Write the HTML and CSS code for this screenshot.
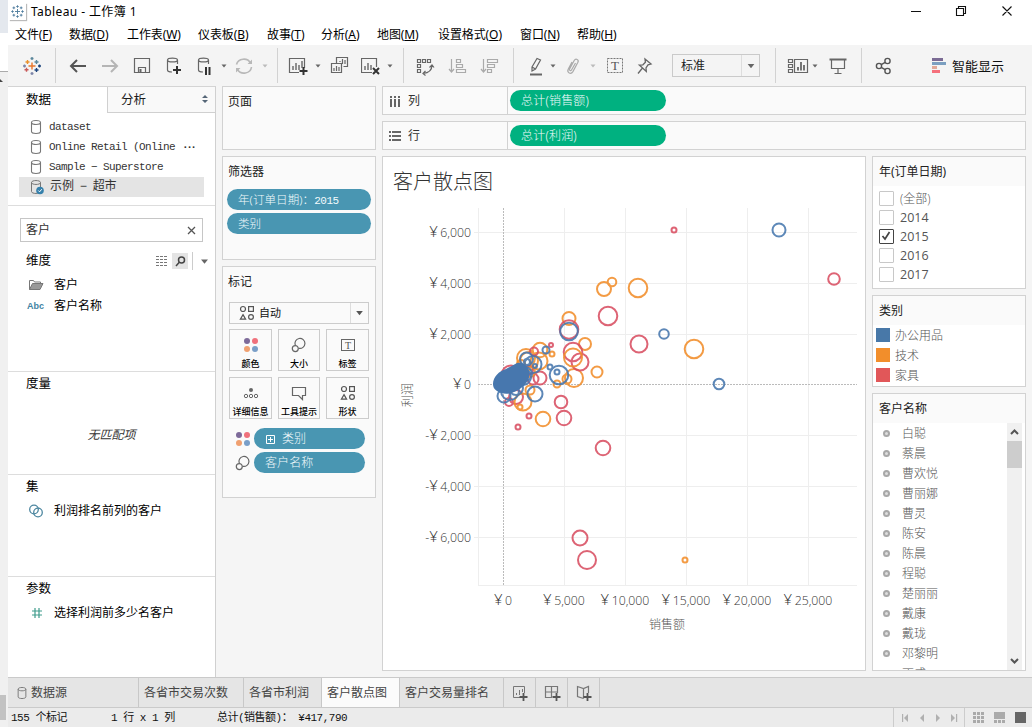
FILE: index.html
```html
<!DOCTYPE html>
<html lang="zh-CN">
<head>
<meta charset="utf-8">
<title>Tableau - 工作簿 1</title>
<link rel="stylesheet" href="styles.css">
</head>
<body>
<svg class="defs" aria-hidden="true">
  <defs>
    <symbol id="caret" viewBox="0 0 8 6"><path d="M1.5 1.5h5L4 4.6z" fill="currentColor"/></symbol>
    <symbol id="db" viewBox="0 0 14 16"><path d="M2.5 3.5v9c0 2.6 9 2.6 9 0v-9M2.5 3.5c0-2.6 9-2.6 9 0s-9 2.6-9 0z" fill="none" stroke="#777" stroke-width="1.1"/></symbol>
    <symbol id="shapes" viewBox="0 0 16 16"><g fill="none" stroke="#555" stroke-width="1.2"><circle cx="4" cy="4" r="2.5"/><rect x="9.6" y="1.6" width="4.8" height="4.8"/><path d="M4 9.6l2.6 4.6H1.4z"/><circle cx="12" cy="12" r="2.4"/></g></symbol>
    <symbol id="dots" viewBox="0 0 16 16"><circle cx="4" cy="4" r="3" fill="#7d6a99"/><circle cx="12" cy="4" r="3" fill="#f0717c"/><circle cx="4" cy="12" r="3" fill="#f0a070"/><circle cx="12" cy="12" r="3" fill="#7a9fc8"/></symbol>
    <symbol id="size" viewBox="0 0 16 16"><g fill="none" stroke="#666" stroke-width="1.2"><path d="M4.300 8.300A5 5 0 1 1 7.800 11.300"/><circle cx="4.300" cy="11.600" r="3"/></g></symbol>
    <symbol id="mark" viewBox="0 0 18 18"><g fill="none" stroke="#4d7c9d" stroke-width="1.1"><path d="M9 6v6M6 9h6M9 1.500v3M7.500 3h3M9 13.500v3M7.500 15h3M1.500 9h3M3 7.500v3M13.500 9h3M15 7.500v3M4.600 3v3.200M3 4.600h3.200M13.400 3v3.200M11.800 4.600h3.200M4.600 11.800v3.200M3 13.400h3.200M13.400 11.800v3.200M11.800 13.400h3.200"/></g></symbol>
  </defs>
</svg>
<div class="screen">
  <aside class="edge">
    <div class="edge-top"></div><div class="edge-mid"></div>
    <div class="edge-rest"><span class="edge-arrow"></span><span class="edge-thumb"></span></div>
  </aside>
  <div class="app">
    <header class="titlebar">
      <span class="appicon"><svg width="16" height="16"><use href="#mark"/></svg></span>
      <span class="apptitle">Tableau - 工作簿 1</span>
      <svg class="winbtns" width="110" height="20" fill="none" stroke="#111" stroke-width="1.1"><path d="M1 10.500h10M46.500 7.500h7v7h-7zM48.500 7.500v-2h7v7h-2M92.500 5.500l9 9M101.500 5.500l-9 9"/></svg>
    </header>
    <nav class="menubar">
      <span>文件(<u>F</u>)</span><span>数据(<u>D</u>)</span><span>工作表(<u>W</u>)</span><span>仪表板(<u>B</u>)</span><span>故事(<u>T</u>)</span><span>分析(<u>A</u>)</span><span>地图(<u>M</u>)</span><span>设置格式(<u>O</u>)</span><span>窗口(<u>N</u>)</span><span>帮助(<u>H</u>)</span>
    </nav>
    <div class="toolbar">
      <svg class="g14" width="20" height="20" viewBox="0 0 20 20" fill="none" stroke-width="1.4"><path stroke="#e8762c" d="M10 6.500v7M6.500 10h7"/><path stroke="#c85a5a" d="M4.500 11.800v4M2.500 13.800h4"/><path stroke="#5b879b" d="M14.500 4v4M12.500 6h4M10 1v3M8.500 2.500h3"/><path stroke="#eb912c" d="M5.500 4v4M3.500 6h4"/><path stroke="#1f457e" d="M14.500 12v4M12.500 14h4M17.500 8.500v3M16 10h3"/><path stroke="#7c85a8" d="M10 16v3M8.500 17.500h3M2.500 8.500v3M1 10h3"/></svg>
      <i class="sep g13"></i>
      <svg class="g12" width="20" height="20" fill="none" stroke="#555" stroke-width="2"><path d="M18 10H3M9 4l-6 6 6 6"/></svg>
      <svg class="g12" width="20" height="20" fill="none" stroke="#b5b5b5" stroke-width="2"><path d="M2 10h15M11 4l6 6-6 6"/></svg>
      <svg class="g12" width="20" height="20" fill="none" stroke="#666" stroke-width="1.200"><path d="M2.500 2.500h15v14h-15zM6.500 16.500v-5h7v5"/><path d="M8.500 13v3" stroke-width="2"/></svg>
      <svg class="g11" width="20" height="20" fill="none" stroke="#666" stroke-width="1.200"><path d="M14.500 8V4c0-2.500-10-2.500-10 0v10c0 1.300 2 2 4.500 2M4.500 4c0 2.600 10 2.600 10 0"/><path d="M14 10v8M10 14h8" stroke="#333" stroke-width="2"/></svg>
      <svg class="g11" width="20" height="20" fill="none" stroke="#666" stroke-width="1.200"><path d="M14.500 8V4c0-2.500-10-2.500-10 0v10c0 1.300 2 2 4.500 2M4.500 4c0 2.600 10 2.600 10 0"/><path d="M12 11v8M15.500 11v8" stroke="#333" stroke-width="2"/></svg>
      <svg class="caret g6" width="8" height="6"><use href="#caret"/></svg>
      <svg class="g6" width="20" height="20" fill="none" stroke="#b8b8b8" stroke-width="1.600"><path d="M2.500 8.500A7.500 7 0 0 1 16.500 7M17.500 11A7.500 7 0 0 1 3.500 13.500"/><path d="M18 3.500v4.500h-4.500zM2 16.500V12h4.500z" fill="#b8b8b8" stroke="none"/></svg>
      <svg class="caret pale g7" width="8" height="6"><use href="#caret"/></svg>
      <i class="sep g8"></i>
      <svg class="g10" width="20" height="20" fill="none" stroke="#666" stroke-width="1.200"><path d="M11 16.500H1.500v-14h15V12"/><path d="M5 14v-4M8 14V7M11 14V9M14 12V5" stroke-width="1.400"/><path d="M15.500 11v8M11.500 15h8" stroke="#333" stroke-width="2"/></svg>
      <svg class="caret g6" width="8" height="6"><use href="#caret"/></svg>
      <svg class="g8" width="20" height="20" fill="none" stroke="#666" stroke-width="1.200"><path d="M6.500 7.500v-6h11v9h-4M1.500 7.500h10v9h-10zM4 15v-3M6.500 15v-5M9 15v-4M10 6V5M12.500 8V3M15 8V4"/></svg>
      <svg class="g11" width="20" height="20" fill="none" stroke="#666" stroke-width="1.200"><path d="M11 16.500H.5v-14h15V11"/><path d="M4 14v-4M7 14V7M10 14V9" stroke-width="1.400"/><path d="M12 12l6 6M18 12l-6 6" stroke="#333" stroke-width="2"/></svg>
      <svg class="caret g5" width="8" height="6"><use href="#caret"/></svg>
      <i class="sep g9"></i>
      <svg class="g11" width="20" height="20" fill="none" stroke="#666" stroke-width="1.200"><path d="M2.500 3.500h3v3h-3zM7.500 3.500h3v3h-3zM12.500 3.500h3v3h-3zM2.500 8.500h3v3h-3zM2.500 13.500h3v3h-3zM17 9c0 6-4 8-9 8.500M14.500 11.500L17 9l2 2.500M10.500 15L8 17.500l2.500 2"/></svg>
      <svg class="g12" width="20" height="20" fill="none" stroke="#aaa" stroke-width="1.200"><path d="M4.500 3v13M2 13l2.500 3L7 13M9.500 3.500h4v3h-4zM9.500 8.500h6v3h-6zM9.500 13.500h9v3h-9z"/></svg>
      <svg class="g12" width="20" height="20" fill="none" stroke="#aaa" stroke-width="1.200"><path d="M4.500 3v13M2 13l2.500 3L7 13M8.500 3.500h10v3h-10zM8.500 8.500h7v3h-7zM8.500 13.500h4v3h-4z"/></svg>
      <i class="sep g14"></i>
      <svg class="g12" width="20" height="20" fill="none" stroke="#666" stroke-width="1.200"><path d="M6 11l5-8.500 3.500 1.500-5 9-3.500 2zM6 11l3.500 2"/><path d="M4 18.500h12" stroke-width="2"/></svg>
      <svg class="caret g3" width="8" height="6"><use href="#caret"/></svg>
      <svg class="g6" width="20" height="20" fill="none" stroke="#aaa" stroke-width="1.200"><path d="M12.500 7l-4 7c-.8 1.400-2.600.4-1.900-1l4.600-8.500c1.600-2.700 5-.8 3.700 1.800l-5 9.300c-2 3.300-6.300 1-4.700-2.300L9 6"/></svg>
      <svg class="caret pale g6" width="8" height="6"><use href="#caret"/></svg>
      <svg class="g8" width="20" height="20"><rect x="2.500" y="2.500" width="15" height="14" fill="none" stroke="#777" stroke-dasharray="2 1"/><text class="tglyph" x="10" y="14" text-anchor="middle">T</text></svg>
      <svg class="g10" width="20" height="20" fill="none" stroke="#666" stroke-width="1.300"><path d="M10 3l6 5-3 .8-2 3 .3 3.700-7-6.500 3.600-.2 2.500-2.500zM7.500 12L3 17.500"/></svg>
      <div class="fit g17"><span>标准</span><b><svg width="12" height="8" viewBox="0 0 8 6"><use href="#caret"/></svg></b></div>
      <i class="sep g15"></i>
      <svg class="g11" width="22" height="20" fill="none" stroke="#666" stroke-width="1.200"><path d="M1.500 3.500h4v3h-4zM1.500 8.500h4v3h-4zM1.500 13.500h4v3h-4zM7.500 3.500h13v13h-13z"/><path d="M11 14.500V11M14 14.500V6M17 14.500V9" stroke-width="1.800"/></svg>
      <svg class="caret g2" width="8" height="6"><use href="#caret"/></svg>
      <svg class="g9" width="20" height="20" fill="none" stroke="#666" stroke-width="1.200"><path d="M3.500 4v8.500h13V4M10 12.500v5M6.500 17.500h7"/><path d="M1.500 3.500h17" stroke-width="2"/></svg>
      <i class="sep g13"></i>
      <svg class="g12" width="20" height="20" fill="none" stroke="#555" stroke-width="1.400"><circle cx="5" cy="10" r="2.600"/><circle cx="13.500" cy="5" r="2.600"/><circle cx="13.500" cy="15" r="2.600"/><path d="M7.200 8.700l4-2.400M7.200 11.300l4 2.400"/></svg>
      <svg class="g37" width="15" height="16"><path fill="#7b6b94" d="M1 0h11v3H1z"/><path fill="#7b9fc0" d="M1 4h14v3H1z"/><path fill="#e0a898" d="M1 8h5v3H1z"/><path fill="#f5707c" d="M1 12h8v3H1z"/></svg>
      <span class="showme">智能显示</span>
    </div>

    <main class="workspace">
      <section class="data">
        <div class="tabs"><b>数据</b><span>分析<svg width="8" height="8"><path d="M4 0l3 3H1zM4 8L1 5h6z" fill="#567"/></svg></span></div>
        <ul class="sources">
          <li><svg width="14" height="16"><use href="#db"/></svg><span>dataset</span></li>
          <li><svg width="14" height="16"><use href="#db"/></svg><span>Online Retail (Online</span><b>···</b></li>
          <li><svg width="14" height="16"><use href="#db"/></svg><span>Sample − Superstore</span></li>
          <li class="on"><svg width="16" height="16" viewBox="0 0 16 16"><path d="M2.500 3.500v9c0 2.600 9 2.600 9 0v-9M2.500 3.500c0-2.600 9-2.600 9 0s-9 2.600-9 0z" fill="none" stroke="#777"/><circle cx="11" cy="11.500" r="3.800" fill="#3580ab"/><path d="M9.300 11.500l1.300 1.300 2.200-2.600" fill="none" stroke="#fff"/></svg><span>示例 − 超市</span></li>
        </ul>
        <div class="fields dims">
          <div class="search"><span>客户</span><svg width="9" height="9" stroke="#555" stroke-width="1.300"><path d="M1 1l7 7M8 1L1 8"/></svg></div>
          <div class="head"><h3>维度</h3><svg width="13" height="12" stroke="#777" stroke-dasharray="3 1"><path d="M1 1.500h12M1 4.500h12M1 7.500h12M1 10.500h12"/></svg><i class="find"><svg width="11" height="11" fill="none" stroke="#444" stroke-width="1.500"><circle cx="6.500" cy="4" r="3"/><path d="M4.300 6.200L1 10"/></svg></i><i class="bar"></i><svg class="caret" width="11" height="9" viewBox="0 0 8 6"><use href="#caret"/></svg></div>
          <div class="field"><svg width="16" height="14"><path d="M1.500 11.500v-9h4l1 1.500h6v2" fill="none" stroke="#777"/><path d="M1.500 11.500l3-6H15l-3 6z" fill="#999" stroke="#777"/></svg>客户</div>
          <div class="field"><em>Abc</em>客户名称</div>
        </div>
        <div class="fields measures"><h3>度量</h3><p>无匹配项</p></div>
        <div class="fields sets"><h3>集</h3><div class="field"><svg width="16" height="14" fill="none" stroke="#4d87a0" stroke-width="1.300"><circle cx="6" cy="5.500" r="4.300"/><circle cx="10" cy="8.500" r="4.300"/></svg>利润排名前列的客户</div></div>
        <div class="fields params"><h3>参数</h3><div class="field"><svg width="16" height="14" fill="none" stroke="#3f9c8c" stroke-width="1.200"><path d="M7 2v10M11 2v10M4 5h10M4 9h10"/></svg>选择利润前多少名客户</div></div>
      </section>

      <section class="cards">
        <div class="card pages"><h3>页面</h3></div>
        <div class="card filters"><h3>筛选器</h3><div class="pill blue"><span>年(订单日期)：<s>2015</s></span></div><div class="pill blue">类别</div></div>
        <div class="card marks"><h3>标记</h3>
          <div class="type"><svg width="16" height="16"><use href="#shapes"/></svg><span>自动</span><b><svg width="11" height="8" viewBox="0 0 8 6"><use href="#caret"/></svg></b></div>
          <div class="buttons">
            <div><svg width="16" height="16"><use href="#dots"/></svg>颜色</div>
            <div><svg width="16" height="16"><use href="#size"/></svg>大小</div>
            <div><svg width="16" height="16"><rect x="1.500" y="2.500" width="13" height="11" fill="none" stroke="#666"/><text class="tglyph small" x="8" y="11.500" text-anchor="middle">T</text></svg>标签</div>
            <div><svg width="16" height="16"><circle cx="8" cy="5" r="2" fill="#666"/><g fill="none" stroke="#666"><circle cx="3" cy="11" r="1.700"/><circle cx="8" cy="11" r="1.700"/><circle cx="13" cy="11" r="1.700"/></g></svg>详细信息</div>
            <div><svg width="16" height="16"><path d="M1.500 2.500h13v8h-3v4l-4-4h-6z" fill="none" stroke="#666" stroke-width="1.200"/></svg>工具提示</div>
            <div><svg width="16" height="16"><use href="#shapes"/></svg>形状</div>
          </div>
          <div class="enc"><svg width="16" height="16"><use href="#dots"/></svg><div class="pill blue"><svg width="11" height="11" fill="none" stroke="#fff"><path d="M1.500 1.500h8v8h-8zM5.500 3v5M3 5.500h5"/></svg>类别</div></div>
          <div class="enc"><svg width="16" height="16"><use href="#size"/></svg><div class="pill blue">客户名称</div></div>
        </div>
      </section>

      <section class="sheet">
        <div class="shelf"><span class="label"><svg width="12" height="12"><path d="M1 1h2v2H1zM5 1h2v2H5zM9 1h2v2H9zM1 4h2v8H1zM5 4h2v8H5zM9 4h2v8H9z" fill="#666"/></svg>列</span><div class="pill green">总计(销售额)</div></div>
        <div class="shelf"><span class="label"><svg width="12" height="12"><path d="M0 1h2v2H0zM0 5h2v2H0zM0 9h2v2H0zM3 1h9v2H3zM3 5h9v2H3zM3 9h9v2H3z" fill="#666"/></svg>行</span><div class="pill green">总计(利润)</div></div>
        <div class="viewrow">
          <div class="view">
            <h1>客户散点图</h1>
            <svg class="chart" width="482" height="470" viewBox="383 200 482 470">
              <g class="grid"><path d="M478.500 208v378M564.500 208v378M625.500 208v378M686.500 208v378M747.500 208v378M808.500 208v378M474 232.500h383M474 283.500h383M474 334.500h383M474 435.500h383M474 486.500h383M474 537.500h383M478 585.500h379"/></g>
              <path class="zero" d="M503.500 208v378M478 384.500h379"/>
              <g class="ticks end">
                <text x="471" y="237"><tspan>¥</tspan>6,000</text><text x="471" y="288"><tspan>¥</tspan>4,000</text><text x="471" y="339"><tspan>¥</tspan>2,000</text><text x="471" y="389"><tspan>¥</tspan>0</text><text x="471" y="440">-<tspan>¥</tspan>2,000</text><text x="471" y="491">-<tspan>¥</tspan>4,000</text><text x="471" y="542">-<tspan>¥</tspan>6,000</text>
              </g>
              <g class="ticks mid">
                <text x="503" y="605"><tspan>¥</tspan>0</text><text x="564" y="605"><tspan>¥</tspan>5,000</text><text x="625" y="605"><tspan>¥</tspan>10,000</text><text x="686" y="605"><tspan>¥</tspan>15,000</text><text x="747" y="605"><tspan>¥</tspan>20,000</text><text x="808" y="605"><tspan>¥</tspan>25,000</text>
              </g>
              <text class="axis" x="667" y="629">销售额</text>
              <text class="axis" transform="translate(412 395) rotate(-90)">利润</text>
              <g class="dot red"><circle cx="608" cy="316" r="9.300"/><circle cx="639" cy="344" r="8.500"/><circle cx="674" cy="230" r="2.500"/><circle cx="834" cy="279" r="5.800"/><circle cx="561" cy="402" r="6.300"/><circle cx="564" cy="418" r="7.300"/><circle cx="529" cy="416" r="2.500"/><circle cx="518" cy="427" r="2.500"/><circle cx="603" cy="448" r="7.300"/><circle cx="580" cy="538" r="7.500"/><circle cx="587" cy="560" r="9"/><circle cx="551" cy="345" r="2"/><circle cx="540" cy="378" r="6.500"/><circle cx="533" cy="379" r="5.500"/><circle cx="516" cy="397" r="7"/><circle cx="509" cy="402" r="4"/><circle cx="511" cy="375" r="9.500"/></g>
              <g class="dot orange"><circle cx="638" cy="288" r="9.300"/><circle cx="604" cy="289" r="7"/><circle cx="612" cy="282" r="4.300"/><circle cx="694" cy="349" r="9.300"/><circle cx="685" cy="560" r="2.500"/><circle cx="569" cy="318.500" r="6.500"/><circle cx="585" cy="344" r="6"/><circle cx="597" cy="372" r="5.500"/><circle cx="574" cy="378" r="9"/><circle cx="567" cy="379" r="4.500"/><circle cx="557" cy="384" r="3.500"/><circle cx="552" cy="354" r="2.500"/><circle cx="540" cy="350" r="7.300"/><circle cx="526" cy="358" r="9"/><circle cx="529" cy="361" r="9"/><circle cx="539" cy="361" r="8.500"/><circle cx="523" cy="402" r="8.500"/><circle cx="520" cy="407" r="2.500"/><circle cx="530" cy="390" r="4.500"/><circle cx="543" cy="419" r="7.300"/></g>
              <g class="dot red"><circle cx="569" cy="329.500" r="9.300"/><circle cx="573" cy="352" r="9.300"/><circle cx="580" cy="362" r="8.500"/><circle cx="534" cy="351.500" r="4"/><circle cx="529" cy="370" r="4"/></g>
              <g class="dot orange"><circle cx="573" cy="357.500" r="9"/><circle cx="530" cy="372" r="5"/><circle cx="521" cy="364" r="4"/></g>
              <g class="dot blue"><circle cx="779" cy="230" r="6.500"/><circle cx="664" cy="334" r="4.800"/><circle cx="719" cy="384" r="5.300"/><circle cx="569" cy="331.500" r="8.800"/><circle cx="559" cy="375" r="9.300"/><circle cx="557" cy="372" r="2.500"/><circle cx="550" cy="367" r="2.500"/><circle cx="546" cy="350" r="3.500"/><circle cx="526.500" cy="359" r="6.500"/><circle cx="533" cy="364.500" r="8.500"/><circle cx="535" cy="394" r="7.500"/><circle cx="504" cy="396" r="6.500"/><circle cx="510" cy="391" r="9"/><circle cx="516" cy="388" r="7"/><circle cx="520" cy="373" r="8"/><circle cx="525" cy="374" r="7"/><circle cx="527" cy="362" r="3"/><circle cx="523" cy="377" r="8"/><circle cx="535" cy="366" r="2"/></g>
              <path class="blob" d="M493 384c0-7 6-13 13-15l11-6c4-1 8 1 10 4 3 4 3 9 1 13-3 6-9 10-14 12-6 3-13 2-17-1-3-2-4-4-4-7z"/>
            </svg>
          </div>
          <aside class="legends">
            <div class="legend years"><h3>年(订单日期)</h3>
              <label><i></i>(全部)</label><label><i></i>2014</label><label><i class="on"><svg width="12" height="12" fill="none" stroke="#444" stroke-width="1.700"><path d="M2.500 6l2.500 3 4.500-7"/></svg></i>2015</label><label><i></i>2016</label><label><i></i>2017</label>
            </div>
            <div class="legend cats"><h3>类别</h3><div><i class="c-blue"></i>办公用品</div><div><i class="c-orange"></i>技术</div><div><i class="c-red"></i>家具</div></div>
            <div class="legend names"><h3>客户名称</h3>
              <div class="scroll"><ul><li>白聪</li><li>蔡晨</li><li>曹欢悦</li><li>曹丽娜</li><li>曹灵</li><li>陈安</li><li>陈晨</li><li>程聪</li><li>楚丽丽</li><li>戴康</li><li>戴珑</li><li>邓黎明</li><li>丁成</li></ul>
              <div class="sbar"><svg width="15" height="18" fill="none" stroke="#555" stroke-width="2"><path d="M4 11l3.500-3.500L11 11"/></svg><i></i><svg class="down" width="15" height="18" fill="none" stroke="#555" stroke-width="2"><path d="M4 7l3.500 3.500L11 7"/></svg></div></div>
            </div>
          </aside>
        </div>
      </section>
    </main>

    <footer class="sheets">
      <span class="t-src"><svg width="12" height="14" viewBox="0 0 14 16"><use href="#db"/></svg>数据源</span><span class="t-a">各省市交易次数</span><span class="t-b">各省市利润</span><span class="t-c on">客户散点图</span><span class="t-d">客户交易量排名</span>
      <span class="t-i"><svg width="18" height="18" fill="none" stroke="#777"><path d="M9 13.500H2.500v-11h11V9M5.500 11V9M8.500 11V6M11.500 8V5"/><path d="M12.500 9v8M8.500 13h8" stroke="#555" stroke-width="1.800"/></svg></span><span class="t-i"><svg width="18" height="18" fill="none" stroke="#777" stroke-width="1.200"><path d="M9 13.500H2.500v-11h12V9M2.500 8h12M8.500 2.500v11"/><path d="M13.500 9v8M9.500 13h8" stroke="#555" stroke-width="1.800"/></svg></span><span class="t-i"><svg width="18" height="18" fill="none" stroke="#777" stroke-width="1.200"><path d="M8.500 14.500l-6-2v-10l6 2 5-2V9M8.500 4.500v10"/><path d="M12.500 9v8M8.500 13h8" stroke="#555" stroke-width="1.800"/></svg></span>
    </footer>
    <footer class="status">
      <span class="s1">155 个标记</span><span class="s2">1 行 x 1 列</span><span class="s3">总计(销售额)： ¥417,790</span>
      <div class="ctl nav"><svg width="64" height="10" fill="#b0b0b0"><path d="M5 5l4-4v8zM3 1h1.200v8H3zM21 5l4-4v8zM37 1l4 4-4 4zM52 1l4 4-4 4zM57 1h1.200v8H57z"/></svg></div>
      <div class="ctl"><svg width="62" height="12"><path fill="#aaa" d="M0 0h3v3H0zM4 0h3v3H4zM8 0h3v3H8zM0 4h3v3H0zM4 4h3v3H4zM8 4h3v3H8zM0 8h3v3H0zM4 8h3v3H4zM8 8h3v3H8zM21 0h11v7H21zM21 8h3v3h-3zM25 8h3v3h-3zM29 8h3v3h-3z"/><path fill="#666" d="M42 0h11v11H42z"/></svg></div>
    </footer>
  </div>
</div>
</body>
</html>
```

FILE: styles.css
```css
* { box-sizing: border-box; margin: 0; padding: 0; }
body { width: 1032px; height: 727px; overflow: hidden; background: #f5f5f5; color: #1c1c1c; font: 12px/16px "Noto Sans", "Noto Sans CJK SC", sans-serif; }
svg { display: block; flex: none; }
h1, h3 { font-weight: 400; }
h3 { font-size: 12px; line-height: 16px; }
i, em { font-style: normal; }
s { text-decoration: none; }
ul { list-style: none; }
.defs { position: absolute; width: 0; height: 0; }
.screen { display: flex; height: 727px; }
.edge { width: 8px; flex: none; display: flex; flex-direction: column; }
.edge-top { height: 33px; background: #e4e8ee; }
.edge-mid { height: 39px; background: #fff; border-bottom: 1px solid #aaa; }
.edge-rest { flex: 1; display: flex; flex-direction: column; justify-content: space-between; background: #f0f0f0; }
.edge-arrow { width: 0; height: 0; margin-top: 7px; border-bottom: 3px solid #444; border-right: 3px solid transparent; }
.edge-thumb { width: 6px; height: 25px; margin-bottom: 7px; background: #c2c2c2; }
.app { flex: 1; display: flex; flex-direction: column; min-width: 0; }

.titlebar { height: 22px; background: #fff; display: flex; align-items: center; padding: 0 17px 0 1px; }
.appicon { padding: 1px; box-shadow: 1px 1px 1px #bbb; height: 17px; width: 17px; }
.appicon svg { width: 15px; height: 15px; }
.apptitle { margin-left: 5px; font-size: 12px; letter-spacing: .4px; margin-top: 2px; color: #000; }
.winbtns { margin-left: auto; margin-right: -5px; }
.menubar { height: 23px; background: #fff; display: grid; grid-template-columns: 54px 58px 71px 69px 54px 56px 61px 82px 57px 60px; padding: 5px 0 0 7px; white-space: nowrap; color: #000; }
.menubar span { letter-spacing: -.1px; }
.menubar u { text-underline-offset: 1px; }

.toolbar { height: 41px; background: #f4f4f4; display: flex; align-items: center; color: #555; }
.sep { width: 1px; height: 35px; background: #d2d2d2; }
.caret { color: #666; }
.toolbar .caret { margin-top: 1px; }
.toolbar .pale { color: #bbb; }
.g2 { margin-left: 2px; } .g3 { margin-left: 3px; } .g5 { margin-left: 5px; } .g6 { margin-left: 6px; }
.g7 { margin-left: 7px; } .g8 { margin-left: 8px; } .g9 { margin-left: 9px; } .g10 { margin-left: 10px; }
.g11 { margin-left: 11px; } .g12 { margin-left: 12px; } .g13 { margin-left: 13px; } .g14 { margin-left: 14px; }
.g15 { margin-left: 15px; } .g17 { margin-left: 17px; } .g37 { margin-left: 37px; }
.tglyph { font: 13px "Liberation Serif", serif; fill: #555; }
.tglyph.small { font-size: 10px; }
.fit { width: 88px; height: 23px; border: 1px solid #cacaca; display: flex; align-items: center; padding-left: 8px; color: #222; }
.fit b { margin-left: auto; width: 18px; height: 21px; border-left: 1px solid #ddd; display: flex; align-items: center; justify-content: center; color: #666; }
.showme { margin-left: 6px; font-size: 13px; color: #111; }

.workspace { height: 591px; display: flex; background: #f5f5f5; }
.data { width: 208px; background: #fff; border-right: 1px solid #d0d0d0; border-top: 1px solid #d4d4d4; }
.tabs { display: flex; height: 26px; }
.tabs b { width: 99px; padding: 5px 0 0 18px; font-weight: 400; font-size: 12.500px; color: #000; }
.tabs span { flex: 1; display: flex; align-items: flex-start; justify-content: space-between; padding: 5px 6px 0 13px; background: #f9f9f9; border-left: 1px solid #d0d0d0; border-bottom: 1px solid #d0d0d0; font-size: 12.500px; }
.tabs svg { margin-top: 3px; }
.sources { padding: 4px 11px 0; height: 93px; border-bottom: 1px solid #ddd; font-family: "Liberation Mono", "Noto Sans CJK SC", monospace; font-size: 11px; letter-spacing: -.6px; color: #333; }
.sources li { display: flex; align-items: center; height: 20px; padding-left: 10px; gap: 6px; white-space: pre; }
.sources b { margin-left: 1px; letter-spacing: -2.500px; font-size: 11px; }
.sources .on { background: #e4e4e4; gap: 5px; }
.sources .on span { font-size: 12px; letter-spacing: -.1px; word-spacing: -1.200px; }
.fields { padding-left: 18px; }
.dims { height: 165px; padding-top: 12px; }
.search { width: 183px; height: 24px; margin-left: -6px; border: 1px solid #c6c6c6; display: flex; align-items: center; justify-content: space-between; padding: 0 6px 0 5px; color: #333; }
.head { display: flex; align-items: center; height: 20px; margin-top: 9px; }
.head h3 { width: 129px; }
.find { width: 16px; height: 16px; background: #e4e4e4; margin-left: 4px; display: flex; align-items: center; justify-content: center; }
.bar { width: 1px; height: 18px; background: #ccc; margin: 0 6px 0 4px; }
.field { display: flex; align-items: center; height: 21px; padding-left: 2px; gap: 10px; color: #000; }
.head + .field { margin-top: 3px; }
.field em { width: 18px; margin: 0 -1px; font: bold 9px "Liberation Sans", sans-serif; color: #4284a3; }
.measures, .sets, .params { border-top: 1px solid #ddd; padding-top: 4px; }
.fields h3 { font-size: 12.500px; color: #000; }
.measures { height: 103px; }
.measures p { margin: 35px 18px 0 0; text-align: center; font-style: italic; color: #333; }
.sets { height: 102px; }
.sets .field, .params .field { margin-top: 5px; }

.cards { width: 154px; margin: 1px 6px 0 6px; display: flex; flex-direction: column; gap: 6px; flex: none; }
.card { background: #fafafa; border: 1px solid #d2d2d2; padding: 7px 5px 0 4px; }
.card h3 { padding-left: 1px; color: #222; }
.pages { height: 64px; margin-top: -1px; }
.filters { height: 104px; }
.marks { height: 232px; }
.pill { height: 21px; border-radius: 11px; display: flex; align-items: center; padding: 1px 0 0 11px; color: #f2fafc; font: 300 12px/16px "Noto Sans", "Noto Sans CJK SC", sans-serif; letter-spacing: .1px; white-space: pre; }
.blue.pill { background: #4996b2; }
.green { background: #00b180; width: 156px; padding-top: 0; letter-spacing: .2px; }
.filters .pill { width: 144px; margin-top: 9px; font-size: 11.500px; }
.filters .pill s { font-family: "Liberation Mono", monospace; font-size: 11px; letter-spacing: -.5px; }
.filters .pill + .pill { margin-top: 3px; }
.type { width: 140px; height: 22px; margin: 12px 0 0 2px; border: 1px solid #ccc; display: flex; align-items: center; padding-left: 9px; gap: 4px; font-size: 11px; color: #111; }
.type b { margin-left: auto; height: 20px; width: 18px; border-left: 1px solid #ddd; color: #555; display: flex; align-items: center; justify-content: center; }
.buttons { display: grid; grid-template-columns: 43px 42px 43px; gap: 6px; margin: 5px 0 0 2px; }
.buttons div { height: 42px; border: 1px solid #ccc; display: flex; flex-direction: column; align-items: center; font-size: 9px; line-height: 12px; font-weight: 500; color: #000; padding-top: 7px; gap: 5px; white-space: nowrap; }
.enc { display: flex; align-items: center; height: 21px; margin: 9px 0 0 8px; gap: 3px; }
.enc + .enc { margin-top: 3px; }
.enc .pill { width: 111px; gap: 6px; }

.sheet { width: 644px; display: flex; flex-direction: column; }
.shelf { height: 29px; margin-bottom: 6px; background: #fafafa; border: 1px solid #d2d2d2; display: flex; align-items: center; }
.label { width: 125px; height: 27px; border-right: 1px solid #d2d2d2; margin-right: 2px; padding-left: 6px; display: flex; align-items: center; gap: 7px; color: #333; }
.viewrow { display: flex; justify-content: space-between; height: 515px; }
.view { width: 484px; background: #fff; border: 1px solid #d2d2d2; }
.view h1 { height: 43px; padding: 13px 0 0 10px; font-size: 20px; line-height: 24px; font-weight: 300; color: #333; }
.grid path { stroke: #eee; fill: none; }
.zero { stroke: #bbb; fill: none; stroke-dasharray: 2 1; }
.ticks { font: 300 12.300px "Open Sans", sans-serif; fill: #333; }
.ticks tspan { letter-spacing: 2.500px; font-size: 15px; }
.end { text-anchor: end; }
.mid, .axis { text-anchor: middle; }
.axis { font: 300 12px "Noto Sans CJK SC", sans-serif; fill: #555; }
.dot { fill: none; stroke-width: 2; opacity: .88; }
.red { stroke: #d94f62; }
.orange { stroke: #f28e2b; }
.dot.blue { stroke: #4777ae; }
.blob { fill: #4777ae; }

.legends { width: 154px; display: flex; flex-direction: column; gap: 6px; }
.legend { background: #fff; border: 1px solid #d2d2d2; color: #555; font-weight: 300; }
.legend h3 { height: 29px; background: #fafafa; padding: 7px 0 0 6px; color: #222; font-weight: 400; }
.years { height: 133px; }
.years h3 { margin-bottom: 3px; }
.years label { display: flex; align-items: center; height: 19px; padding-left: 6px; gap: 6px; font-family: "Open Sans", "Noto Sans CJK SC", sans-serif; font-size: 12.500px; font-weight: 400; }
.years label:first-of-type { font-weight: 300; font-size: 12px; }
.years i { width: 15px; height: 15px; border: 1px solid #c8c8c8; border-radius: 1px; }
.years i.on { border-color: #444; }
.cats { height: 92px; }
.cats div { display: flex; align-items: center; height: 20px; padding: 1px 0 0 3px; gap: 5px; }
.cats i { width: 14px; height: 14px; margin-top: -1px; }
.c-blue { background: #4878a8; } .c-orange { background: #f28e2b; } .c-red { background: #e15759; }
.names { flex: 1; overflow: hidden; }
.scroll { display: flex; height: 247px; overflow: hidden; }
.names ul { flex: 1; padding-top: 1px; }
.names li { height: 20px; line-height: 20px; display: flex; align-items: center; }
.names li::before { content: ""; box-sizing: border-box; width: 7px; height: 7px; margin: -2px 12px 0 10px; border: 2px solid #a8a8a8; background: #ddd; border-radius: 50%; }
.sbar { width: 15px; margin-right: 3px; background: #f0f0f0; display: flex; flex-direction: column; }
.sbar i { height: 27px; background: #cdcdcd; }
.sbar .down { margin-top: auto; }

.sheets { height: 31px; display: flex; background: #e5e5e5; border-top: 1px solid #cacaca; border-bottom: 1px solid #cacaca; color: #444; }
.sheets span { display: flex; align-items: center; border-right: 1px solid #c8c8c8; padding-left: 5px; white-space: nowrap; }
.sheets .t-src { width: 131px; padding-left: 8px; gap: 3px; }
.t-a { width: 105px; } .t-b { width: 78px; } .t-c { width: 78px; } .t-d { width: 104px; }
.sheets .on { background: #fbfbfb; }
.sheets .t-i { width: 32px; padding: 0; justify-content: center; }
.status { height: 19px; display: flex; align-items: center; background: #ebebeb; padding-left: 3px; font-family: "Liberation Mono", "Noto Sans CJK SC", monospace; font-size: 11px; letter-spacing: -.5px; color: #111; white-space: pre; }
.s1 { width: 100px; } .s2 { width: 106px; }
.ctl { height: 19px; border-left: 1px solid #ccc; padding-left: 8px; display: flex; align-items: center; }
.nav { margin-left: auto; width: 71px; padding-left: 5px; }
.ctl:last-child { width: 68px; }
```
